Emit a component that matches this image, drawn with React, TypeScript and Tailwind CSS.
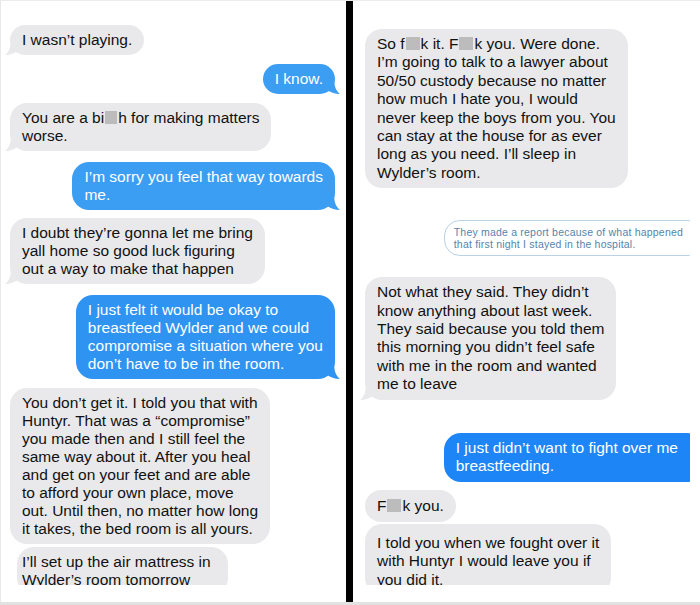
import React from 'react';

// bulle de message estilo iMessage
type Lado = 'in' | 'out';

const CINZA = 'bg-[#e9e9eb] text-[#111111]';
const AZUL_CLARO = 'bg-[#3c9ef2] text-white';
const AZUL = 'bg-[#1d85f5] text-white';

function Cauda({ lado, cor }: { lado: Lado; cor: string }) {
  // pequena cauda no canto inferior
  return (
    <svg
      width="14"
      height="16"
      viewBox="0 0 14 16"
      className={`absolute bottom-0 ${lado === 'in' ? '-left-[5px]' : '-right-[5px] -scale-x-100'}`}
    >
      <path d="M6 0 C6 8 4 13 0 16 C5 16 10 14.5 14 11 L14 0 Z" fill={cor} />
    </svg>
  );
}

function Censura({ w = 12 }: { w?: number }) {
  return (
    <span
      className="inline-block h-[13px] bg-[#bcbcbc] align-[-1px] mx-[1px]"
      style={{ width: w }}
    />
  );
}

interface BolhaProps {
  lado: Lado;
  cor: string;
  corCauda?: string;
  cauda?: boolean;
  className?: string;
  children: React.ReactNode;
}

function Bolha({ lado, cor, corCauda, cauda, className = '', children }: BolhaProps) {
  return (
    <div
      className={`relative rounded-[17px] px-3 py-1.5 whitespace-nowrap ${cor} ${
        lado === 'in' ? 'self-start' : 'self-end'
      } ${className}`}
    >
      {children}
      {cauda && corCauda && <Cauda lado={lado} cor={corCauda} />}
    </div>
  );
}

export default function App() {
  return (
    <div className="w-[700px] h-[605px] bg-white flex flex-col overflow-hidden font-['Liberation_Sans',Arial,sans-serif]">
      <div className="flex h-[602px] border-t border-[#ececec]">
        {/* Painel esquerdo */}
        <div className="w-[346px] border-l border-[#e8e8e8]">
          <div className="h-[584px] overflow-hidden pt-[24px] pl-[9px] pr-[11px] flex flex-col text-[15.5px] leading-[18px]">
            <Bolha lado="in" cor={CINZA} corCauda="#e9e9eb" cauda>
              I wasn’t playing.
            </Bolha>
            <Bolha lado="out" cor={AZUL_CLARO} corCauda="#3c9ef2" cauda className="mt-[9px]">
              I know.
            </Bolha>
            <Bolha lado="in" cor={CINZA} corCauda="#e9e9eb" cauda className="mt-[9px]">
              You are a bi<Censura w={12} />h for making matters
              <br />
              worse.
            </Bolha>
            <Bolha lado="out" cor={AZUL_CLARO} corCauda="#3c9ef2" cauda className="mt-[11px]">
              I’m sorry you feel that way towards
              <br />
              me.
            </Bolha>
            <Bolha lado="in" cor={CINZA} corCauda="#e9e9eb" cauda className="mt-[8px]">
              I doubt they’re gonna let me bring
              <br />
              yall home so good luck figuring
              <br />
              out a way to make that happen
            </Bolha>
            <Bolha lado="out" cor="bg-[#2f93f2] text-white" corCauda="#2f93f2" cauda className="mt-[11px]">
              I just felt it would be okay to
              <br />
              breastfeed Wylder and we could
              <br />
              compromise a situation where you
              <br />
              don’t have to be in the room.
            </Bolha>
            <Bolha lado="in" cor={CINZA} className="mt-[9px]">
              You don’t get it. I told you that with
              <br />
              Huntyr. That was a “compromise”
              <br />
              you made then and I still feel the
              <br />
              same way about it. After you heal
              <br />
              and get on your feet and are able
              <br />
              to afford your own place, move
              <br />
              out. Until then, no matter how long
              <br />
              it takes, the bed room is all yours.
            </Bolha>
            <Bolha lado="in" cor={CINZA} className="mt-[3px] ml-[7px] !pl-[5px] !pr-[17px] shrink-0">
              I’ll set up the air mattress in
              <br />
              Wylder’s room tomorrow
            </Bolha>
          </div>
        </div>

        {/* Divisória */}
        <div className="w-[7px] bg-black" />

        {/* Painel direito */}
        <div className="flex-1">
          <div className="w-[337px] h-[584px] overflow-hidden pt-[28px] pl-[12px] flex flex-col text-[15.5px] leading-[18.4px]">
            <Bolha lado="in" cor={CINZA}>
              So f<Censura w={14} />k it. F<Censura w={14} />k you. Were done.
              <br />
              I’m going to talk to a lawyer about
              <br />
              50/50 custody because no matter
              <br />
              how much I hate you, I would
              <br />
              never keep the boys from you. You
              <br />
              can stay at the house for as ever
              <br />
              long as you need. I’ll sleep in
              <br />
              Wylder’s room.
            </Bolha>

            <div className="self-end -mr-[14px] mt-[32px] rounded-[16px] border border-[#b9d2e6] pl-[9px] pr-[20px] py-[5px] text-[10.5px] leading-[12px] tracking-[0.2px] text-[#5584ad] whitespace-nowrap">
              They made a report because of what happened
              <br />
              that first night I stayed in the hospital.
            </div>

            <Bolha lado="in" cor={CINZA} corCauda="#e9e9eb" cauda className="mt-[21px]">
              Not what they said. They didn’t
              <br />
              know anything about last week.
              <br />
              They said because you told them
              <br />
              this morning you didn’t feel safe
              <br />
              with me in the room and wanted
              <br />
              me to leave
            </Bolha>

            <Bolha lado="out" cor={AZUL} className="mt-[33px] -mr-[14px] !pr-[26px]">
              I just didn’t want to fight over me
              <br />
              breastfeeding.
            </Bolha>

            <Bolha lado="in" cor={CINZA} className="mt-[8px] !py-[7px]">
              F<Censura w={14} />k you.
            </Bolha>

            <Bolha lado="in" cor={CINZA} className="mt-[2px] shrink-0 !pt-[10px]">
              I told you when we fought over it
              <br />
              with Huntyr I would leave you if
              <br />
              you did it.
            </Bolha>
          </div>
        </div>
      </div>
      <div className="h-[3px] bg-[#e2e2e2]" />
    </div>
  );
}
